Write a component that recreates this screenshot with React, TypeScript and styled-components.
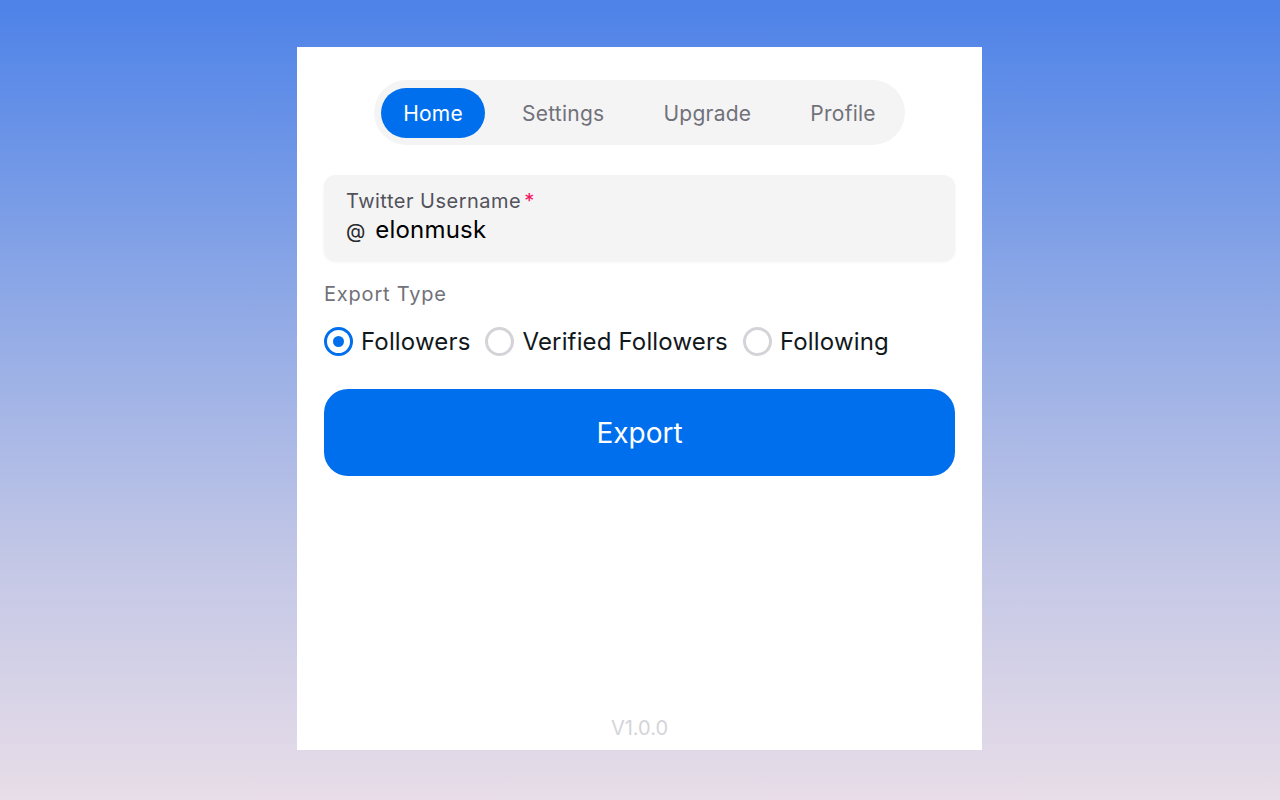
import React, { useState } from "react";
import styled, { createGlobalStyle } from "styled-components";

const GlobalStyle = createGlobalStyle`
  html, body {
    margin: 0;
    padding: 0;
    height: 100%;
  }
  body {
    font-family: Inter, "Noto Sans", "Liberation Sans", sans-serif;
    -webkit-font-smoothing: antialiased;
  }
  * { box-sizing: border-box; }
`;

const Page = styled.div`
  width: 100%;
  height: 800px;
  background: linear-gradient(180deg, #4d82e8 0%, #8aa6e6 35%, #c3c7e6 70%, #e8dde8 100%);
  display: flex;
  justify-content: center;
  padding: 47px 1px 0 0;
`;

const Card = styled.div`
  width: 685px;
  height: 703px;
  background: #ffffff;
  padding: 33px 27px 10px;
  display: flex;
  flex-direction: column;
`;

const TabBar = styled.div`
  align-self: center;
  display: flex;
  align-items: center;
  gap: 15px;
  height: 65px;
  padding: 0 7px;
  background: #f4f4f5;
  border-radius: 999px;
`;

const Tab = styled.button<{ $active?: boolean }>`
  border: none;
  height: 50px;
  padding: 1px 22px 0;
  border-radius: 999px;
  font-family: inherit;
  font-size: 21px;
  letter-spacing: 0.25px;
  color: ${({ $active }) => ($active ? "#ffffff" : "#71717a")};
  background: ${({ $active }) => ($active ? "#006fee" : "transparent")};
  cursor: pointer;
`;

const InputBox = styled.div`
  margin-top: 30px;
  height: 86px;
  background: #f4f4f5;
  border-radius: 12px;
  box-shadow: 0 1px 3px rgba(0, 0, 0, 0.06);
  padding: 13px 22px;
  display: flex;
  flex-direction: column;
  gap: 1px;
`;

const Label = styled.label`
  font-size: 20px;
  letter-spacing: 0.5px;
  color: #52525b;
  line-height: 26px;
`;

const Required = styled.span`
  color: #f31260;
  margin-left: 3px;
`;

const InputRow = styled.div`
  display: flex;
  align-items: baseline;
  gap: 10px;
`;

const At = styled.span`
  font-size: 20px;
  color: #27272a;
`;

const TextInput = styled.input`
  border: none;
  background: transparent;
  outline: none;
  font-family: inherit;
  font-size: 24px;
  letter-spacing: 0.2px;
  color: #000000;
  padding: 0;
  flex: 1;
  line-height: 30px;
`;

const GroupLabel = styled.div`
  margin-top: 20px;
  font-size: 20px;
  letter-spacing: 0.8px;
  color: #71717a;
  line-height: 26px;
`;

const RadioRow = styled.div`
  display: flex;
  align-items: center;
  gap: 15px;
  margin-top: 20px;
`;

const RadioItem = styled.label`
  display: flex;
  align-items: center;
  gap: 8px;
  cursor: pointer;
  font-size: 24px;
  letter-spacing: 0.15px;
  color: #11181c;
`;

const Circle = styled.span<{ $checked?: boolean }>`
  width: 29px;
  height: 29px;
  border-radius: 50%;
  border: 3px solid ${({ $checked }) => ($checked ? "#006fee" : "#d4d4d8")};
  display: flex;
  align-items: center;
  justify-content: center;
  &::after {
    content: "";
    width: 11px;
    height: 11px;
    border-radius: 50%;
    background: #006fee;
    display: ${({ $checked }) => ($checked ? "block" : "none")};
  }
`;

const ExportButton = styled.button`
  margin-top: 33px;
  height: 87px;
  border: none;
  border-radius: 24px;
  background: #006fee;
  color: #ffffff;
  font-family: inherit;
  font-size: 28px;
  cursor: pointer;
`;

const Version = styled.div`
  margin-top: auto;
  text-align: center;
  font-size: 20px;
  color: #d4d4d8;
`;

const options = ["Followers", "Verified Followers", "Following"];

export default function App() {
  const [type, setType] = useState("Followers");
  const [user, setUser] = useState("elonmusk");
  return (
    <>
      <GlobalStyle />
      <Page>
        <Card>
          <TabBar>
            <Tab $active>Home</Tab>
            <Tab>Settings</Tab>
            <Tab>Upgrade</Tab>
            <Tab>Profile</Tab>
          </TabBar>
          <InputBox>
            <Label>
              Twitter Username<Required>*</Required>
            </Label>
            <InputRow>
              <At>@</At>
              <TextInput value={user} onChange={(e) => setUser(e.target.value)} />
            </InputRow>
          </InputBox>
          <GroupLabel>Export Type</GroupLabel>
          <RadioRow>
            {options.map((o) => (
              <RadioItem key={o} onClick={() => setType(o)}>
                <Circle $checked={type === o} />
                {o}
              </RadioItem>
            ))}
          </RadioRow>
          <ExportButton>Export</ExportButton>
          <Version>V1.0.0</Version>
        </Card>
      </Page>
    </>
  );
}
